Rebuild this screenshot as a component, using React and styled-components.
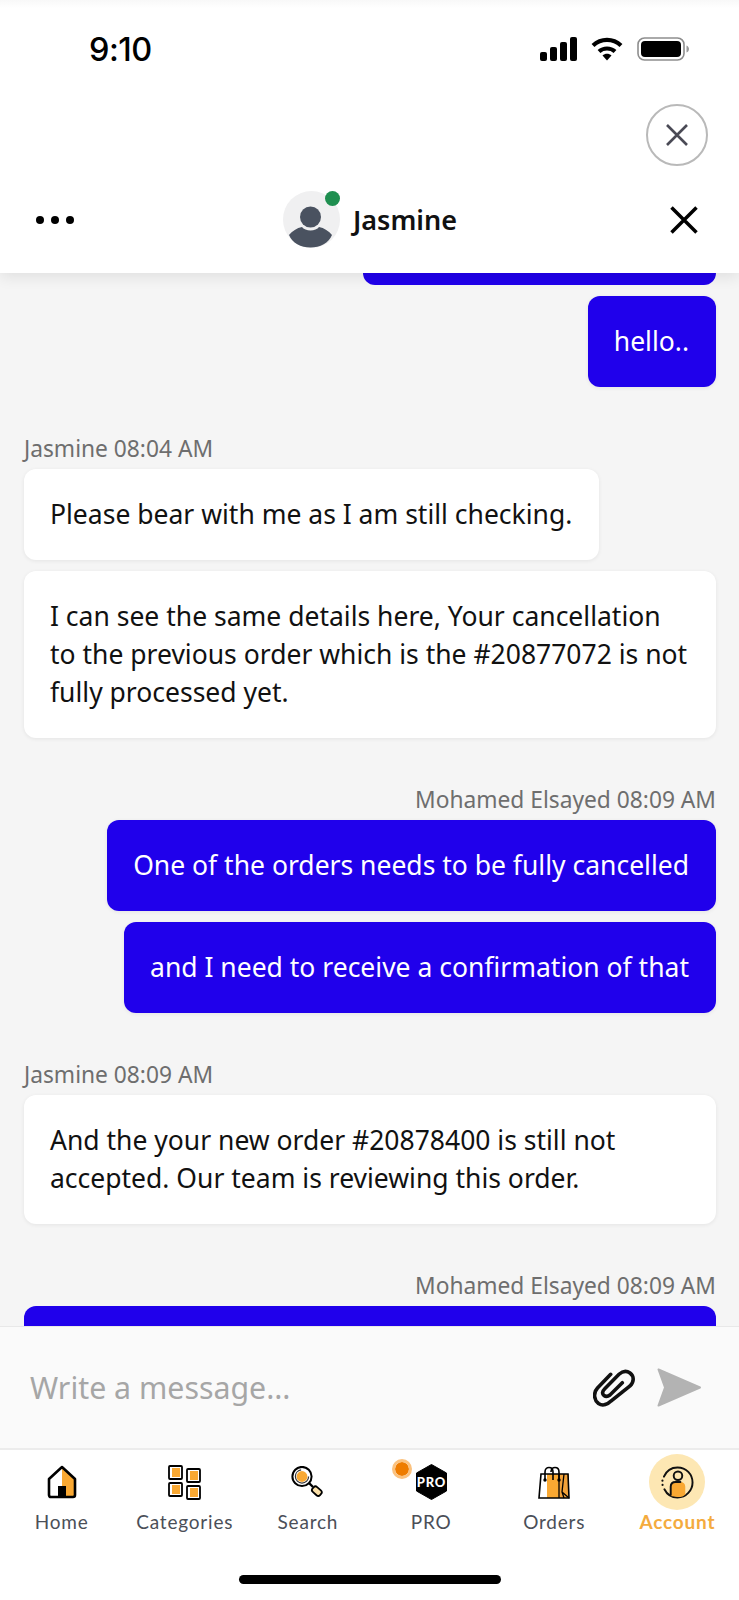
import React from 'react';
import styled, { createGlobalStyle } from 'styled-components';

const GlobalStyle = createGlobalStyle`
  html, body { margin: 0; padding: 0; background: #fff; }
  * { box-sizing: border-box; }
`;

const Screen = styled.div`
  width: 739px;
  height: 1600px;
  display: flex;
  flex-direction: column;
  overflow: hidden;
  background: #fff;
  font-family: "Noto Sans", sans-serif;
`;

const TopBar = styled.header`
  position: relative;
  z-index: 2;
  flex: none;
  height: 273px;
  background: linear-gradient(#f8f8f8, #fff 8px);
  box-shadow: 0 4px 14px rgba(0, 0, 0, 0.09);
`;

const StatusBar = styled.div`
  height: 100px;
  display: flex;
  align-items: center;
  justify-content: space-between;
  padding: 0 50px 2px 89px;
`;

const Time = styled.span`
  font-family: Inter, sans-serif;
  font-size: 32.5px;
  font-weight: 500;
  letter-spacing: -0.5px;
  color: #000;
`;

const StatusIcons = styled.div`
  display: flex;
  align-items: center;
  gap: 14px;
`;

const CloseRow = styled.div`
  height: 66px;
  display: flex;
  justify-content: flex-end;
  align-items: flex-end;
  padding-right: 31px;
`;

const CloseCircle = styled.button`
  width: 62px;
  height: 62px;
  padding: 0;
  display: flex;
  align-items: center;
  justify-content: center;
  border: 2px solid #b9b9b9;
  border-radius: 50%;
  background: #fff;
  color: #4a4a55;
`;

const ChatHeader = styled.div`
  height: 107px;
  display: grid;
  grid-template-columns: 1fr auto 1fr;
  align-items: center;
  padding: 0 40px 0 36px;
`;

const Dots = styled.div`
  display: flex;
  gap: 7px;
`;

const Dot = styled.i`
  width: 8px;
  height: 8px;
  border-radius: 50%;
  background: #000;
`;

const Agent = styled.div`
  display: flex;
  align-items: center;
  gap: 13px;
  padding-left: 5px;
`;

const Avatar = styled.div`
  position: relative;
  width: 57px;
  height: 57px;
`;

const OnlineDot = styled.span`
  position: absolute;
  top: 0;
  right: 0;
  width: 15px;
  height: 15px;
  border-radius: 50%;
  background: #1f8f50;
`;

const AgentName = styled.span`
  font-size: 27px;
  line-height: 34px;
  font-weight: 600;
  color: #111;
`;

const HeaderClose = styled.div`
  justify-self: end;
  display: flex;
`;

const Messages = styled.main`
  flex: none;
  height: 1053px;
  overflow: hidden;
  display: flex;
  flex-direction: column;
  gap: 48px;
  padding: 0 23px 0 24px;
  background: #f5f5f5;
`;

const Group = styled.section`
  flex: none;
  display: flex;
  flex-direction: column;
  gap: 11px;
  align-items: ${(p) => (p.$mine ? 'flex-end' : 'flex-start')};
`;

const Label = styled.div`
  height: 26px;
  margin-bottom: -3px;
  font-size: 22.75px;
  line-height: 28px;
  color: #6e6e6e;
`;

const Bubble = styled.div`
  max-width: 100%;
  padding: 26px 27px 27px 26px;
  border-radius: 12px;
  font-size: 26.5px;
  line-height: 38px;
  background: ${(p) => (p.$mine ? '#2000eb' : '#fff')};
  color: ${(p) => (p.$mine ? '#fff' : '#111')};
  box-shadow: 0 1px 4px rgba(0, 0, 0, 0.07);
`;

const BubbleEnd = styled.div`
  width: ${(p) => (p.$top ? '100%' : '353px')};
  height: ${(p) => (p.$top ? '40px' : '12px')};
  border-radius: ${(p) => (p.$top ? '12px 12px 0 0' : '0 0 12px 12px')};
  background: #2000eb;
`;

const Composer = styled.div`
  flex: none;
  position: relative;
  z-index: 1;
  height: 124px;
  display: flex;
  align-items: center;
  padding: 0 37px 0 30px;
  background: #fafafa;
  border-top: 1px solid #e8e8e8;
  border-bottom: 2px solid #ececec;
`;

const Placeholder = styled.div`
  flex: 1;
  font-size: 30.3px;
  color: #a6a6a6;
`;

const ComposerActions = styled.div`
  display: flex;
  align-items: center;
  gap: 22px;
`;

const Nav = styled.nav`
  flex: none;
  display: grid;
  grid-template-columns: repeat(6, 1fr);
  padding-top: 4px;
`;

const NavItem = styled.div`
  display: flex;
  flex-direction: column;
  align-items: center;
  font-family: Lato, sans-serif;
  font-size: 19px;
  line-height: 24px;
  letter-spacing: 0.8px;
  font-weight: ${(p) => (p.$active ? 700 : 400)};
  color: ${(p) => (p.$active ? '#f4ab3e' : '#4b4f58')};
`;

const NavIcon = styled.div`
  position: relative;
  width: 56px;
  height: 56px;
  display: flex;
  align-items: center;
  justify-content: center;
  border-radius: 50%;
  background: ${(p) => (p.$active ? '#fde7b3' : 'transparent')};
`;

const ProBadge = styled.span`
  position: absolute;
  top: 5px;
  left: -11px;
  width: 20px;
  height: 20px;
  border: 3px solid #fbc27f;
  border-radius: 50%;
  background: #ee7c00;
  background-clip: padding-box;
`;

const HomeIndicator = styled.div`
  flex: none;
  width: 262px;
  height: 9px;
  margin: 41px auto 0;
  border-radius: 5px;
  background: #000;
`;

const SignalIcon = () => (
  <svg width="37" height="24" viewBox="0 0 37 24">
    <rect x="0" y="15" width="7" height="9" rx="2" />
    <rect x="10" y="10" width="7" height="14" rx="2" />
    <rect x="20" y="5" width="7" height="19" rx="2" />
    <rect x="30" y="0" width="7" height="24" rx="2" />
  </svg>
);

const WifiIcon = () => (
  <svg width="32" height="24" viewBox="0 0 32 24" fill="none" stroke="#000" strokeWidth="4.2">
    <path d="M2 8.5C10 1 22 1 30 8.5" />
    <path d="M8 14.5C12.5 10.5 19.5 10.5 24 14.5" />
    <path d="M11.5 18.5L16 23.5L20.5 18.5C18 16 14 16 11.5 18.5Z" fill="#000" stroke="none" />
  </svg>
);

const BatteryIcon = () => (
  <svg width="52" height="24" viewBox="0 0 52 24">
    <rect x="1" y="1" width="46" height="22" rx="6.5" fill="none" stroke="#8e8e8e" strokeWidth="1.6" />
    <rect x="4" y="4" width="40" height="16" rx="4" fill="#000" />
    <path d="M49.5 8.5C51 9 52 10.5 52 12C52 13.5 51 15 49.5 15.5Z" fill="#9a9a9a" />
  </svg>
);

const CrossIcon = ({ size, weight }) => (
  <svg width={size} height={size} viewBox="0 0 24 24" fill="none" stroke="currentColor" strokeWidth={weight}>
    <path d="M2 2L22 22M22 2L2 22" />
  </svg>
);

const AvatarIcon = () => (
  <svg width="57" height="57" viewBox="0 0 57 57">
    <circle cx="28.5" cy="28.5" r="28.5" fill="#f0f0f1" />
    <circle cx="27.5" cy="26" r="10.5" fill="#4a5260" />
    <path d="M6 44C9 40 14 37 19 36C22 40.5 33 40.5 36 36C41 37 46 40 49 44C46 52 37 56.5 27.5 56.5C18 56.5 9 52 6 44Z" fill="#4a5260" />
  </svg>
);

const PaperclipIcon = () => (
  <svg width="42" height="38" viewBox="0 0 42 38" fill="none" stroke="#111" strokeWidth="3.6" strokeLinecap="round">
    <path d="M17.7 5.3L4.5 19C0 24 1 31 5.5 34.5C10 37.5 15 35 18 32L37 17C41.5 12.5 41 7 37 4C33 1 29 2.5 26 5.3L12 19.5C9 22.5 9 25 11 26.5C13 28 15 27.5 17 26L29.3 13.7" />
  </svg>
);

const SendIcon = () => (
  <svg width="45" height="39" viewBox="0 0 45 39">
    <path d="M1.5 1.5L43 19.5L1.5 37.5L8 19.5Z" fill="#b3b3b3" stroke="#b3b3b3" strokeWidth="2" strokeLinejoin="round" />
  </svg>
);

const HomeIcon = () => (
  <svg width="30" height="34" viewBox="0 0 30 34">
    <path d="M15 2L28 14V30C28 31.3 27.3 32 26 32H4C2.7 32 2 31.3 2 30V14Z" fill="#fff" />
    <path d="M15 2L28 14V30C28 31.3 27.3 32 26 32H15Z" fill="#f9a832" />
    <rect x="11" y="21" width="8" height="11" fill="#000" />
    <path d="M15 2L28 14V30C28 31.3 27.3 32 26 32H4C2.7 32 2 31.3 2 30V14Z" fill="none" stroke="#000" strokeWidth="2.6" strokeLinejoin="round" />
  </svg>
);

const CategoryTile = ({ x, y }) => (
  <g>
    <rect x={x} y={y} width="13" height="13" rx="1" fill="#fff" stroke="#000" strokeWidth="1.8" />
    <rect x={x + 3} y={y + 2} width="8" height="9" fill="#f9a832" />
  </g>
);

const CategoriesIcon = () => (
  <svg width="33" height="35" viewBox="0 0 33 35">
    <CategoryTile x={1} y={1} />
    <CategoryTile x={19} y={4} />
    <CategoryTile x={1} y={18} />
    <CategoryTile x={19} y={21} />
  </svg>
);

const SearchIcon = () => (
  <svg width="33" height="32" viewBox="0 0 33 32">
    <path d="M18 17L22 21" stroke="#000" strokeWidth="2.4" />
    <g transform="rotate(42 26 25)">
      <rect x="21" y="22" width="10" height="6.5" rx="2.5" fill="#fbe0a8" stroke="#000" strokeWidth="1.8" />
    </g>
    <circle cx="11" cy="10.5" r="9.6" fill="#fff" stroke="#000" strokeWidth="2" />
    <circle cx="11" cy="10.5" r="5.4" fill="#f9a832" />
    <circle cx="11" cy="10.5" r="6.6" fill="none" stroke="#333" strokeWidth="1.2" strokeDasharray="30 12" />
  </svg>
);

const ProIcon = () => (
  <svg width="31" height="36" viewBox="0 0 31 36">
    <path d="M15.5 0.5L30.5 9V27L15.5 35.5L0.5 27V9Z" fill="#000" stroke="#000" strokeLinejoin="round" />
    <text x="15.5" y="22.5" textAnchor="middle" fontFamily="Lato, sans-serif" fontWeight="900" fontSize="13" fill="#fff">PRO</text>
  </svg>
);

const OrdersIcon = () => (
  <svg width="32" height="34" viewBox="0 0 32 34" fill="none">
    <path d="M3 9H22V33H1Z" fill="#fff" />
    <path d="M9 9H21V33H9Z" fill="#f9a832" />
    <path d="M21 9H31V33H21Z" fill="#f2a23a" />
    <path d="M3 9H30L31 33H1Z" stroke="#000" strokeWidth="1.6" />
    <path d="M21 9V33M26 9L24 27L26 33M24 27L31 33" stroke="#000" strokeWidth="1.3" />
    <path d="M7 15V7C7 1 15 1 15 7V15M13 7C13 1 21 1 21 7V15" stroke="#000" strokeWidth="1.6" />
    <circle cx="7" cy="15" r="1.7" fill="#000" />
    <circle cx="21" cy="15" r="1.7" fill="#000" />
  </svg>
);

const AccountIcon = () => (
  <svg width="33" height="33" viewBox="0 0 34 34" fill="none" stroke="#111" strokeWidth="2" strokeLinecap="round">
    <path d="M3 11C6 4 11 1.5 17 1.5C26 1.5 32.5 8.5 32.5 17C32.5 25 26 32.5 17 32.5C11 32.5 6 29 3.5 24" />
    <path d="M1.5 15V15.1M1.6 19.5V19.6" strokeWidth="2.2" />
    <path d="M10 31V21.5C10 18.5 12 16.5 15 16.5H20C23 16.5 25 18.5 25 21.5V29C24 31 21 32 17 32Z" fill="#f9a832" stroke="none" />
    <path d="M10 30V21.5C10 18.5 12 16.5 15 16.5H20" />
    <circle cx="17.5" cy="10" r="4.4" />
  </svg>
);

const navItems = [
  { label: 'Home', icon: <HomeIcon /> },
  { label: 'Categories', icon: <CategoriesIcon /> },
  { label: 'Search', icon: <SearchIcon /> },
  { label: 'PRO', icon: <ProIcon />, badge: true },
  { label: 'Orders', icon: <OrdersIcon /> },
  { label: 'Account', icon: <AccountIcon />, active: true },
];

const thread = [
  { mine: true, scrolledOff: true, bubbles: ['hello..'] },
  { who: 'Jasmine 08:04 AM', bubbles: ['Please bear with me as I am still checking.', 'I can see the same details here, Your cancellation to the previous order which is the #20877072 is not fully processed yet.'] },
  { who: 'Mohamed Elsayed 08:09 AM', mine: true, bubbles: ['One of the orders needs to be fully cancelled', 'and I need to receive a confirmation of that'] },
  { who: 'Jasmine 08:09 AM', bubbles: ['And the your new order #20878400 is still not accepted. Our team is reviewing this order.'] },
  { who: 'Mohamed Elsayed 08:09 AM', mine: true, cutOff: true, bubbles: [] },
];

export default function App() {
  return (
    <Screen>
      <GlobalStyle />
      <TopBar>
        <StatusBar>
          <Time>9:10</Time>
          <StatusIcons>
            <SignalIcon />
            <WifiIcon />
            <BatteryIcon />
          </StatusIcons>
        </StatusBar>
        <CloseRow>
          <CloseCircle>
            <CrossIcon size={24} weight={2.6} />
          </CloseCircle>
        </CloseRow>
        <ChatHeader>
          <Dots>
            <Dot />
            <Dot />
            <Dot />
          </Dots>
          <Agent>
            <Avatar>
              <AvatarIcon />
              <OnlineDot />
            </Avatar>
            <AgentName>Jasmine</AgentName>
          </Agent>
          <HeaderClose>
            <CrossIcon size={30} weight={2.8} />
          </HeaderClose>
        </ChatHeader>
      </TopBar>
      <Messages>
        {thread.map((group, i) => (
          <Group key={i} $mine={group.mine}>
            {group.scrolledOff && <BubbleEnd />}
            {group.who && <Label>{group.who}</Label>}
            {group.bubbles.map((text) => (
              <Bubble key={text} $mine={group.mine}>{text}</Bubble>
            ))}
            {group.cutOff && <BubbleEnd $top />}
          </Group>
        ))}
      </Messages>
      <Composer>
        <Placeholder>Write a message...</Placeholder>
        <ComposerActions>
          <PaperclipIcon />
          <SendIcon />
        </ComposerActions>
      </Composer>
      <Nav>
        {navItems.map((item) => (
          <NavItem key={item.label} $active={item.active}>
            <NavIcon $active={item.active}>
              {item.icon}
              {item.badge && <ProBadge />}
            </NavIcon>
            {item.label}
          </NavItem>
        ))}
      </Nav>
      <HomeIndicator />
    </Screen>
  );
}
